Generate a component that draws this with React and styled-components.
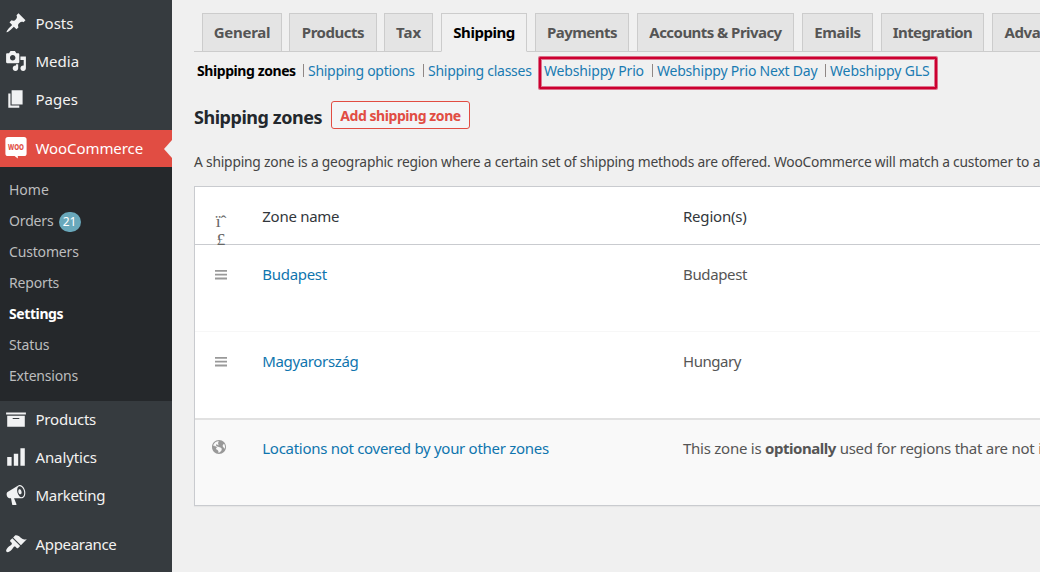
import React from 'react';
import styled, { createGlobalStyle } from 'styled-components';

const GlobalStyle = createGlobalStyle`
  * { box-sizing: border-box; }
  body {
    margin: 0;
    background: #f0f0f0;
    color: #444;
    font-family: "Noto Sans", "Open Sans", sans-serif;
    font-size: 14.3px;
    overflow: hidden;
  }
  a { color: inherit; text-decoration: none; }
`;

const Page = styled.div`
  display: flex;
  height: 572px;
  overflow: hidden;
`;

const Sidebar = styled.nav`
  flex: 0 0 172px;
  background: #363b3f;
  padding-top: 4px;
`;

const MenuItem = styled.a`
  display: flex;
  align-items: center;
  height: ${(p) => p.$height || 38}px;
  margin-top: ${(p) => p.$gap || 0}px;
  padding: 0 0 ${(p) => (p.$active ? 1 : 0)}px 5px;
  gap: 8.5px;
  position: relative;
  color: ${(p) => (p.$active ? '#fff' : '#f3f2f1')};
  background: ${(p) => (p.$active ? '#e14d43' : 'transparent')};
  font-size: 15px;
  letter-spacing: ${(p) => p.$ls || 0}px;
`;

const MenuIcon = styled.svg`
  width: 22px;
  height: 22px;
  flex: none;
  fill: #f1f2f3;
`;

const Notch = styled.span`
  position: absolute;
  right: 0;
  top: 10px;
  border: 9px solid transparent;
  border-left-width: 0;
  border-right-width: 8px;
  border-right-color: #f0f0f0;
`;

const SubMenu = styled.div`
  background: #25282b;
  height: 234px;
  padding: 7px 0 0 9px;
`;

const SubItem = styled.a`
  display: flex;
  align-items: center;
  height: 31px;
  gap: 5px;
  font-size: 14px;
  letter-spacing: ${(p) => p.$ls || 0}px;
  font-weight: ${(p) => (p.$current ? 700 : 400)};
  color: ${(p) => (p.$current ? '#fff' : '#bcbdbe')};
`;

const Badge = styled.span`
  display: flex;
  align-items: center;
  justify-content: center;
  width: 22px;
  height: 20px;
  margin-top: 2px;
  border-radius: 10px;
  background: #69a8bb;
  color: #fff;
  font-size: 12px;
`;

const Main = styled.main`
  flex: 1;
  min-width: 0;
  padding: 13px 0 0 22px;
  overflow: hidden;
`;

const Tabs = styled.div`
  display: flex;
  height: 39px;
  padding-left: 8px;
  width: 900px;
  border-bottom: 1px solid #ccc;
`;

const Tab = styled.a`
  flex: none;
  display: flex;
  align-items: center;
  justify-content: center;
  width: ${(p) => p.$width}px;
  height: 39px;
  padding-bottom: 2px;
  margin-right: ${(p) => p.$after || 8}px;
  border: 1px solid #ccc;
  border-bottom-color: ${(p) => (p.$active ? '#f0f0f0' : '#ccc')};
  background: ${(p) => (p.$active ? '#f0f0f0' : '#e4e4e4')};
  color: ${(p) => (p.$active ? '#000' : '#555')};
  font-size: 15px;
  font-weight: 700;
  letter-spacing: ${(p) => p.$ls || 0}px;
`;

const SubNav = styled.div`
  position: relative;
  display: flex;
  align-items: center;
  height: 20px;
  margin-top: 8px;
  padding-left: 3px;
  white-space: pre;
`;

const SubLink = styled.a`
  flex: none;
  width: ${(p) => p.$width}px;
  color: ${(p) => (p.$current ? '#000' : '#1a7bb2')};
  font-weight: ${(p) => (p.$current ? 700 : 400)};
  font-size: 14px;
  letter-spacing: ${(p) => p.$ls || 0}px;
`;

const Divider = styled.span`
  flex: none;
  width: 1px;
  height: 13px;
  margin-right: 4px;
  background: #8f8785;
`;

const Highlight = styled.div`
  position: absolute;
  left: 345px;
  top: -3px;
  width: 398px;
  height: 32px;
  border: 2px solid #cc0030;
  border-radius: 1px;
  box-shadow: 0 0 0 1px rgba(204, 0, 48, 0.55), inset 0 0 0 1px rgba(204, 0, 48, 0.5);
`;

const Heading = styled.div`
  display: flex;
  align-items: center;
  height: 28px;
  margin-top: 21px;
`;

const Title = styled.h2`
  margin: 3px 0 0;
  width: 137px;
  font-size: 18px;
  line-height: 24px;
  color: #23282d;
  white-space: nowrap;
  letter-spacing: -0.46px;
`;

const AddButton = styled.button`
  width: 139px;
  height: 28px;
  padding: 1px 0 0;
  border: 1px solid #e14d43;
  border-radius: 3px;
  background: #f3f5f6;
  color: #e14d43;
  font: 700 14px "Noto Sans", sans-serif;
  letter-spacing: -0.44px;
  white-space: nowrap;
`;

const Intro = styled.p`
  margin: 22px 0 0;
  height: 22px;
  line-height: 22px;
  font-size: 13.8px;
  white-space: nowrap;
  letter-spacing: -0.2px;
`;

const Table = styled.div`
  margin-top: 13px;
  width: 900px;
  border: 1px solid #c9cbcf;
  background: #fff;
  box-shadow: 0 1px 1px rgba(0, 0, 0, 0.04);
`;

const Row = styled.div`
  display: grid;
  grid-template-columns: 67.3px 420.7px 1fr;
  height: ${(p) => p.$height}px;
  padding-top: ${(p) => p.$pad || 17}px;
  border-top: ${(p) => p.$line || 'none'};
  background: ${(p) => p.$bg || 'transparent'};
  font-size: 15px;
  line-height: 24px;
  white-space: nowrap;
`;

const IconCell = styled.div`
  padding: ${(p) => p.$top || 0}px 0 0 ${(p) => p.$left}px;
  line-height: 0;
`;

const SortGlyph = styled.div`
  width: 13px;
  text-align: center;
  font: 17.6px/18px "Liberation Serif", serif;
  color: #666;
  white-space: pre-line;
`;

const Cell = styled.div`
  color: ${(p) => p.$color || '#555'};
  letter-spacing: ${(p) => p.$ls || 0}px;
`;

const Strong = styled.b`
  letter-spacing: -0.45px;
`;

const LINK = '#0f75ae';

const paths = {
  posts: 'M10.44 3.02l1.82-1.82 6.36 6.35-1.83 1.82c-1.05-.68-2.48-.57-3.41.36l-.75.75c-.92.93-1.04 2.35-.35 3.41l-1.83 1.82-2.41-2.41-2.8 2.79c-.42.42-3.38 2.71-3.8 2.29s1.86-3.39 2.28-3.81l2.79-2.79L4.1 9.36l1.83-1.82c1.05.69 2.48.57 3.4-.36l.75-.75c.93-.92 1.05-2.35.36-3.41z',
  media: 'M13 11V4c0-.55-.45-1-1-1h-1.67L9 1H5L3.67 3H2c-.55 0-1 .45-1 1v7c0 .55.45 1 1 1h10c.55 0 1-.45 1-1zM7 4.5c1.38 0 2.5 1.12 2.5 2.5S8.38 9.5 7 9.5 4.5 8.38 4.5 7 5.62 4.5 7 4.5zM14 6h5v10.5c0 1.38-1.12 2.5-2.5 2.5S14 17.88 14 16.5s1.12-2.5 2.5-2.5c.17 0 .34.02.5.05V9h-3V6zm-4 8.05V13h2v3.5c0 1.38-1.12 2.5-2.5 2.5S7 17.88 7 16.5 8.12 14 9.5 14c.17 0 .34.02.5.05z',
  pages: 'M6 15V2h10v13H6zm-1 1h8v2H3V5h2v11z',
  products: 'M19 4v2H1V4h18zM2 7h16v10H2V7zm11 3V9H7v1h6z',
  analytics: 'M18 18V2h-4v16h4zm-6 0V7H8v11h4zm-6 0v-8H2v8h4z',
  marketing: 'M18.15 5.94c.46 1.62.38 3.22-.02 4.48-.42 1.28-1.26 2.18-2.3 2.48-.16.06-.26.06-.4.06-.06.02-.12.02-.18.02-.06.02-.14.02-.22.02h-6.8l2.22 5.5c.02.14-.06.26-.14.34-.08.1-.24.16-.34.16H6.95c-.1 0-.26-.06-.34-.16-.08-.08-.16-.2-.14-.34l-1-5.5H4.25l-.02-.02c-.5.06-1.08-.18-1.54-.62s-.88-1.08-1.06-1.88c-.24-.8-.2-1.56-.02-2.2.18-.62.58-1.08 1.06-1.3l.02-.02 9-5.4c.1-.06.18-.1.24-.16.06-.04.14-.08.24-.12.16-.08.28-.12.5-.18 1.04-.3 2.24.1 3.22.98s1.84 2.24 2.26 3.86zm-2.58 5.98h-.02c.4-.1.74-.34 1.04-.7.58-.7.86-1.76.86-3.04 0-.64-.1-1.3-.28-1.98-.34-1.36-1.02-2.5-1.78-3.24s-1.68-1.1-2.46-.88c-.82.22-1.4.96-1.7 2-.32 1.04-.28 2.36.06 3.72.38 1.36 1 2.5 1.8 3.24.78.74 1.62 1.1 2.48.88zm-2.54-7.08c.22-.04.42-.02.62.04.38.16.76.48 1.02 1s.42 1.2.42 1.78c0 .3-.04.56-.12.8-.18.48-.44.84-.86.94-.34.1-.8-.06-1.14-.4s-.64-.86-.78-1.5c-.18-.62-.12-1.24.02-1.72s.48-.84.82-.94z',
  appearance: 'M14.48 11.06L7.41 3.99l1.5-1.5c.5-.56 2.3-.47 3.51.32 1.21.8 1.43 1.28 2.91 2.1 1.18.64 2.45 1.26 4.45.85zm-.71.71L6.7 4.7 4.93 6.47c-.39.39-.39 1.02 0 1.41l1.06 1.06c.39.39.39 1.03 0 1.42-.6.6-1.43 1.11-2.21 1.69-.35.26-.7.53-1.01.84C1.43 14.23.4 16.08 1.4 17.07c.99 1 2.84-.03 4.18-1.36.31-.31.58-.66.85-1.02.57-.78 1.08-1.61 1.69-2.21.39-.39 1.02-.39 1.41 0l1.06 1.06c.39.39 1.02.39 1.41 0z',
};

const Item = ({ icon, label, ...rest }) => (
  <MenuItem {...rest}>
    <MenuIcon viewBox="0 0 20 20"><path d={paths[icon]} /></MenuIcon>
    <span>{label}</span>
  </MenuItem>
);

const WooIcon = () => (
  <MenuIcon viewBox="0 0 22 22">
    <path d="M3 0h16a2.6 2.6 0 0 1 2.6 2.6v13.8A2.6 2.6 0 0 1 19 19h-6.2v2.6L9.6 19H3A2.6 2.6 0 0 1 .4 16.4V2.6A2.6 2.6 0 0 1 3 0z" fill="#fff" />
    <text x="3" y="12.8" textLength="16" lengthAdjust="spacingAndGlyphs" fontSize="9" fontWeight="800" letterSpacing="0" fill="#e14d43">WOO</text>
  </MenuIcon>
);

const BarsIcon = () => (
  <svg width="12" height="10" viewBox="0 0 12 10" fill="#999">
    <path d="M0 0h12v1.8H0zM0 3.8h12v1.8H0zM0 7.6h12v1.8H0z" />
  </svg>
);

const GlobeIcon = () => (
  <svg width="14" height="14" viewBox="0 0 18 18" fill="#999">
    <path d="M9 0C4.03 0 0 4.03 0 9s4.03 9 9 9 9-4.03 9-9-4.03-9-9-9zm3.46 11.95c0 1.47-.8 3.3-4.06 4.7.3-4.17-2.52-3.69-3.2-5 .126-1.1.804-2.063 1.8-2.55-1.552-.266-3-.96-4.18-2 .05.47.28.904.64 1.21-.782-.295-1.458-.817-1.94-1.5.977-3.225 3.883-5.482 7.25-5.63-.84 1.38-1.5 4.13 0 5.57C7.23 7 6.26 5 5.41 5.79c-1.13 1.06.33 2.51 3.42 3.08 3.29.59 3.66 1.58 3.63 3.08zm1.34-4c-.32-1.11.62-2.23 1.69-3.14 1.356 1.955 1.67 4.45.84 6.68-.77-1.89-2.17-2.32-2.53-3.57v.03z" />
  </svg>
);

const tabs = [
  { label: 'General', width: 80, after: 7, ls: -0.25 },
  { label: 'Products', width: 88, after: 7, ls: -0.48 },
  { label: 'Tax', width: 49 },
  { label: 'Shipping', width: 86, active: true, ls: -0.48 },
  { label: 'Payments', width: 94, ls: -0.5 },
  { label: 'Accounts & Privacy', width: 157, ls: -0.55 },
  { label: 'Emails', width: 71, ls: -0.3 },
  { label: 'Integration', width: 103, ls: -0.6 },
  { label: 'Advanced', width: 95, ls: -0.4 },
];

const links = [
  { label: 'Shipping zones', width: 106, current: true, ls: -0.42 },
  { label: 'Shipping options', width: 115, ls: -0.28 },
  { label: 'Shipping classes', width: 116, ls: -0.27 },
  { label: 'Webshippy Prio', width: 108, noDivider: true, ls: -0.17 },
  { label: 'Webshippy Prio Next Day', width: 168, ls: -0.22 },
  { label: 'Webshippy GLS', width: 104, ls: -0.12 },
];

export default function App() {
  return (
    <>
      <GlobalStyle />
      <Page>
        <Sidebar>
          <Item icon="posts" label="Posts" />
          <Item icon="media" label="Media" />
          <Item icon="pages" label="Pages" />
          <MenuItem $active $height={37} $gap={12} $ls={-0.08}>
            <WooIcon />
            <span>WooCommerce</span>
            <Notch />
          </MenuItem>
          <SubMenu>
            <SubItem>Home</SubItem>
            <SubItem $ls={-0.15}>Orders<Badge>21</Badge></SubItem>
            <SubItem $ls={-0.17}>Customers</SubItem>
            <SubItem $ls={-0.15}>Reports</SubItem>
            <SubItem $current $ls={-0.4}>Settings</SubItem>
            <SubItem $ls={-0.12}>Status</SubItem>
            <SubItem $ls={-0.2}>Extensions</SubItem>
          </SubMenu>
          <Item icon="products" label="Products" $height={36} $ls={-0.22} />
          <Item icon="analytics" label="Analytics" $gap={1} $ls={-0.12} />
          <Item icon="marketing" label="Marketing" $ls={-0.32} />
          <Item icon="appearance" label="Appearance" $gap={11} $ls={-0.32} />
        </Sidebar>
        <Main>
          <Tabs>
            {tabs.map((t) => (
              <Tab key={t.label} $width={t.width} $after={t.after} $active={t.active} $ls={t.ls}>{t.label}</Tab>
            ))}
          </Tabs>
          <SubNav>
            {links.map((l, i) => (
              <React.Fragment key={l.label}>
                {i > 0 && !l.noDivider && <Divider />}
                <SubLink $width={l.width} $current={l.current} $ls={l.ls}>{l.label}</SubLink>
              </React.Fragment>
            ))}
            <Highlight />
          </SubNav>
          <Heading>
            <Title>Shipping zones</Title>
            <AddButton>Add shipping zone</AddButton>
          </Heading>
          <Intro>A shipping zone is a geographic region where a certain set of shipping methods are offered. WooCommerce will match a customer to a</Intro>
          <Table>
            <Row $height={57}>
              <IconCell $left={19.5} $top={8}><SortGlyph>{'ïˆ\n£'}</SortGlyph></IconCell>
              <Cell $color="#32373c" $ls={-0.28}>Zone name</Cell>
              <Cell $color="#32373c" $ls={-0.2}>Region(s)</Cell>
            </Row>
            <Row $height={87} $line="1px solid #c9cbcf">
              <IconCell $left={20} $top={8}><BarsIcon /></IconCell>
              <Cell $color={LINK} $ls={-0.3}>Budapest</Cell>
              <Cell $ls={-0.35}>Budapest</Cell>
            </Row>
            <Row $height={87} $line="1px solid #f7f7f7">
              <IconCell $left={20} $top={8}><BarsIcon /></IconCell>
              <Cell $color={LINK} $ls={-0.36}>Magyarország</Cell>
              <Cell $ls={-0.45}>Hungary</Cell>
            </Row>
            <Row $height={87} $line="2px solid #e1e1e1" $bg="#f9f9f9" $pad={16}>
              <IconCell $left={17} $top={4}><GlobeIcon /></IconCell>
              <Cell $color={LINK} $ls={-0.29}>Locations not covered by your other zones</Cell>
              <Cell $ls={-0.25}>This zone is <Strong>optionally</Strong> used for regions that are not included</Cell>
            </Row>
          </Table>
        </Main>
      </Page>
    </>
  );
}
